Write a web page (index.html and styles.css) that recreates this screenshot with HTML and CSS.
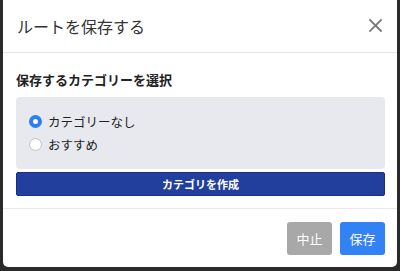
FILE: index.html
```html
<!DOCTYPE html>
<html lang="ja">
<head>
<meta charset="utf-8">
<link rel="stylesheet" href="styles.css">
</head>
<body>
<div class="modal">
  <div class="modal-header">
    <h1 class="title">ルートを保存する</h1>
    <button class="close" aria-label="close">
      <svg width="13" height="13" viewBox="0 0 13 13"><path d="M1 1L12 12M12 1L1 12" stroke="#7a7a7a" stroke-width="1.8" stroke-linecap="square"/></svg>
    </button>
  </div>
  <div class="modal-body">
    <div class="label">保存するカテゴリーを選択</div>
    <div class="options">
      <label class="option"><span class="radio checked"></span>カテゴリーなし</label>
      <label class="option"><span class="radio"></span>おすすめ</label>
    </div>
    <button class="create">カテゴリを作成</button>
  </div>
  <div class="modal-footer">
    <button class="btn cancel">中止</button>
    <button class="btn save">保存</button>
  </div>
</div>
</body>
</html>
```
FILE: styles.css
```css
html, body {
  margin: 0;
  padding: 0;
}
body {
  background: #2a2a2a;
  width: 400px;
  height: 271px;
  overflow: hidden;
  font-family: "Noto Sans CJK JP", "Noto Sans", sans-serif;
  color: #333;
}
.modal {
  margin-left: 3px;
  width: 394px;
  height: 267px;
  background: #fff;
  border-radius: 0 0 5px 5px;
  display: flex;
  flex-direction: column;
}
.modal-header {
  height: 52px;
  border-bottom: 1px solid #e5e5e5;
  display: flex;
  align-items: center;
  justify-content: space-between;
  padding: 0 15px 0 14px;
}
.title {
  margin: 0;
  font-size: 16px;
  font-weight: normal;
  line-height: 24px;
  color: #333;
  padding-bottom: 1px;
}
.close {
  background: none;
  border: 0;
  padding: 0;
  width: 13px;
  height: 13px;
  display: flex;
  margin-top: -2px;
}
.modal-body {
  padding: 18px 12px 12px 13px;
  border-bottom: 1px solid #e9e9e9;
}
.label {
  font-size: 13px;
  font-weight: bold;
  line-height: 18px;
  color: #222;
}
.options {
  margin-top: 8px;
  background: #e7e9ef;
  border-radius: 4px;
  padding: 13px 0 13px 13px;
}
.option {
  display: flex;
  align-items: center;
  gap: 6px;
  height: 23px;
  font-size: 12.5px;
  color: #222;
}
.radio {
  width: 11px;
  height: 11px;
  border-radius: 50%;
  background: #fff;
  border: 1px solid #c2c2c2;
  box-sizing: content-box;
}
.radio.checked {
  width: 5px;
  height: 5px;
  border: 4px solid #2e7cf6;
  background: #fff;
}
.create {
  display: block;
  width: 100%;
  margin-top: 3px;
  height: 24px;
  background: #223f9e;
  border: 1px solid #172f86;
  border-radius: 2px;
  color: #fff;
  font-family: inherit;
  font-size: 11px;
  font-weight: bold;
  padding: 0;
}
.modal-footer {
  flex: 1;
  display: flex;
  justify-content: flex-end;
  align-items: flex-start;
  gap: 8px;
  padding: 13px 12px 0 0;
}
.btn {
  width: 45px;
  height: 33px;
  border: 0;
  border-radius: 3px;
  color: #fff;
  font-family: inherit;
  font-size: 13px;
  padding: 0;
}
.cancel {
  background: #a8a8a8;
}
.save {
  background: #3282f6;
}
```
